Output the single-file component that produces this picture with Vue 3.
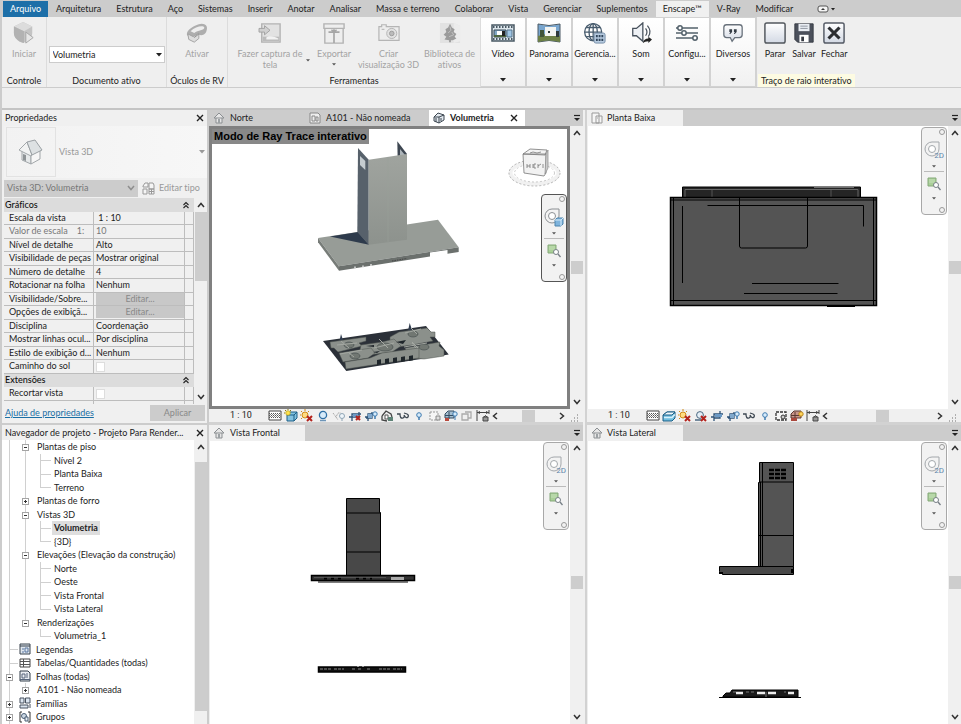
<script setup>
import { ref } from 'vue'

const ribbonTabs = ['Arquitetura', 'Estrutura', 'Aço', 'Sistemas', 'Inserir', 'Anotar', 'Analisar', 'Massa e terreno', 'Colaborar', 'Vista', 'Gerenciar', 'Suplementos', 'Enscape™', 'V-Ray', 'Modificar']
const activeRibbonTab = ref('Enscape™')

const toolButtons = [
  { lines: ['Fazer captura de', 'tela'], icon: 'capture', size: 'wide', side: true },
  { lines: ['Exportar'], icon: 'export', size: 'narrow', drop: true },
  { lines: ['Criar', 'visualização 3D'], icon: 'camera', size: 'mid' },
  { lines: ['Biblioteca de', 'ativos'], icon: 'library', size: 'mid' },
]
const dropPanels = [
  { label: 'Vídeo', icon: 'video' },
  { label: 'Panorama', icon: 'panorama' },
  { label: 'Gerencia...', icon: 'globe' },
  { label: 'Som', icon: 'sound' },
  { label: 'Configu...', icon: 'sliders' },
  { label: 'Diversos', icon: 'speech' },
]
const rayButtons = [
  { label: 'Parar', icon: 'stop' },
  { label: 'Salvar', icon: 'save' },
  { label: 'Fechar', icon: 'close' },
]

const graphics = [
  { name: 'Escala da vista', value: ' 1 : 10' },
  { name: 'Valor de escala    1:', value: '10', muted: true },
  { name: 'Nível de detalhe', value: 'Alto' },
  { name: 'Visibilidade de peças', value: 'Mostrar original' },
  { name: 'Número de detalhe', value: '4' },
  { name: 'Rotacionar na folha', value: 'Nenhum' },
  { name: 'Visibilidade/Sobre...', type: 'button' },
  { name: 'Opções de exibiçã...', type: 'button' },
  { name: 'Disciplina', value: 'Coordenação' },
  { name: 'Mostrar linhas ocul...', value: 'Por disciplina' },
  { name: 'Estilo de exibição d...', value: 'Nenhum' },
  { name: 'Caminho do sol', type: 'check' },
]
const groups = [
  { title: 'Gráficos', rows: graphics },
  { title: 'Extensões', rows: [{ name: 'Recortar vista', type: 'check' }, { name: '', value: '' }] },
]

const tree = [
  { cells: ['v', 'v minus'], text: 'Plantas de piso' },
  { cells: ['v', 'v', 't'], text: 'Nível 2' },
  { cells: ['v', 'v', 't'], text: 'Planta Baixa' },
  { cells: ['v', 'v', 'l'], text: 'Terreno' },
  { cells: ['v', 'v plus'], text: 'Plantas de forro' },
  { cells: ['v', 'v minus'], text: 'Vistas 3D' },
  { cells: ['v', 'v', 't'], text: 'Volumetria', current: true },
  { cells: ['v', 'v', 'l'], text: '{3D}' },
  { cells: ['v', 'v minus'], text: 'Elevações (Elevação da construção)' },
  { cells: ['v', 'v', 't'], text: 'Norte' },
  { cells: ['v', 'v', 't'], text: 'Oeste' },
  { cells: ['v', 'v', 't'], text: 'Vista Frontal' },
  { cells: ['v', 'v', 'l'], text: 'Vista Lateral' },
  { cells: ['v', 'half minus'], text: 'Renderizações' },
  { cells: ['v', 'none', 'l'], text: 'Volumetria_1' },
  { cells: ['t'], icon: 'legend', text: 'Legendas' },
  { cells: ['t'], icon: 'table', text: 'Tabelas/Quantidades (todas)' },
  { cells: ['v minus'], icon: 'sheets', text: 'Folhas (todas)' },
  { cells: ['v', 'half plus'], text: 'A101 - Não nomeada' },
  { cells: ['v plus'], icon: 'family', text: 'Famílias' },
  { cells: ['v plus'], icon: 'group', text: 'Grupos' },
]

const views = [
  {
    id: 'volumetria', active: true, nav: '3d', viewBox: '212 129 355 277',
    tabs: [
      { label: 'Norte', icon: 'home', size: 'plain' },
      { label: 'A101 - Não nomeada', icon: 'sheet', size: 'long' },
      { label: 'Volumetria', icon: 'box', size: 'plain', current: true },
    ],
    controls: ['grid', 'shade3d', 'sunoff', 'shadow', 'teapot', 'cropoff', 'crop', 'lockhouse', 'glasses', 'bulb', 'reveal', 'analysis', 'ghost', 'constraint'],
  },
  {
    id: 'planta', nav: '2d', viewBox: '588 126 360 283',
    tabs: [{ label: 'Planta Baixa', icon: 'plan', size: 'plain', shown: true }],
    controls: ['grid', 'shade', 'sunoff', 'shadowoff', 'cropon', 'crop', 'glasses', 'bulb', 'revealdark', 'analysissun', 'constraint'],
  },
  {
    id: 'frontal', nav: '2d', viewBox: '210 441 360 283',
    tabs: [{ label: 'Vista Frontal', icon: 'home', size: 'plain', shown: true }],
  },
  {
    id: 'lateral', nav: '2d', viewBox: '588 441 360 283',
    tabs: [{ label: 'Vista Lateral', icon: 'home', size: 'plain', shown: true }],
  },
]
</script>

<template>
  <svg class="sprite" aria-hidden="true">
    <defs>
      <linearGradient id="glass" x1="0" y1="0" x2="0" y2="1"><stop offset="0" stop-color="#fff" /><stop offset="1" stop-color="#d3d9e4" /></linearGradient>
      <linearGradient id="metal" x1="0" y1="0" x2="0" y2="1"><stop offset="0" stop-color="#a0a49f" /><stop offset="1" stop-color="#8d928d" /></linearGradient>
    </defs>
    <symbol id="i-start" viewBox="0 0 24 24">
      <path d="M1 5 11 0l10 5v7c0 5-5 9-10 11C5 21 1 17 1 12z" fill="#c4c4c4" />
      <path d="M1 5 11 0l10 5-9 5z" fill="#dcdcdc" /><path d="M12 10v13C5 21 1 17 1 12V5z" fill="#b2b2b2" />
      <path d="M14 11v12l8-6z" fill="#e6e6e6" stroke="#a3a3a3" />
    </symbol>
    <symbol id="i-vr" viewBox="0 0 24 24">
      <path d="M1 14C0 9 9 3 17 2c6 0 7 4 5 9-2 4-6 4-8 3l-5 5-5-1z" fill="#aeaeae" />
      <path d="M5 10c5-5 14-7 15-4 0 3-7 3-11 6z" fill="#eee" /><path d="m2 13 6 3 6-4v6l-5 4-6-3z" fill="#ddd" stroke="#a0a0a0" /><path d="m9 17 5-4" stroke="#888" />
    </symbol>
    <symbol id="i-capture" viewBox="0 0 24 24">
      <path d="M3 2h20v20H3z" fill="#e2e2e2" stroke="#b2b2b2" stroke-width="1.500" /><path d="M4 16h18v5H4z" fill="#bbb" />
      <path d="M8 17c3-3 10-1 13 1v1H8z" fill="#f2f2f2" /><path d="M0 7h6V4l6 5-6 5v-3H0z" fill="#d0d0d0" stroke="#a0a0a0" />
    </symbol>
    <symbol id="i-export" viewBox="0 0 24 24">
      <path d="M1 2h22v5H1zM2 7h20v16H2z" fill="#eee" stroke="#b2b2b2" stroke-width="1.500" /><path d="M12 8v15M6 11h12M9 9q3 0 3 2 0-2 3-2" fill="none" stroke="#a6a6a6" stroke-width="1.800" />
    </symbol>
    <symbol id="i-camera" viewBox="0 0 24 24">
      <path d="M1 5h3V3h5v2h14v15H1z" fill="#ededed" stroke="#b5b5b5" stroke-width="1.300" /><circle cx="15" cy="12.500" r="5.500" fill="#e2e2e2" stroke="#b0b0b0" />
      <circle cx="15" cy="12.500" r="2.500" fill="#bbb" stroke="#999" /><path d="M4 8h3" stroke="#aaa" />
    </symbol>
    <symbol id="i-library" viewBox="0 0 24 24">
      <path d="M1 1h15l7 3v19H1z" fill="#e2e2e2" /><path d="M16 1v22l7-2V4z" fill="#ececec" />
      <path d="m12 2 2 4 3 2-1 3 3 2-2 3 2 2-4 2h-2v2h-2v-2l-5-1 2-3-3-2 3-3-1-3 3-2z" fill="#9b9b9b" /><path d="m12 5 1 4-3 3m4-1 2 3-5 2" fill="none" stroke="#c4c4c4" />
    </symbol>
    <symbol id="i-video" viewBox="0 0 24 20">
      <path d="M1 2h22v16H1z" fill="#dce6ec" stroke="#4a5964" stroke-width="1.500" /><path d="M2 4h20M2 16h20" stroke="#4a5964" stroke-width="2" stroke-dasharray="1.500 1.500" />
      <path d="M3 7h12v7H3z" fill="#82a9c6" stroke="#394957" /><path d="M6 8h6v4H6z" fill="#fff" /><path d="M3 12h12v2H3z" fill="#4e6741" /><path d="M11 8h3v5h-3z" fill="#222" /><path d="M16 7h5v7h-5z" fill="#9fc6e6" stroke="#56758c" />
    </symbol>
    <symbol id="i-panorama" viewBox="0 0 24 20">
      <path d="M1 1q11 3 22 0v18q-11-3-22 0z" fill="#79a6cf" stroke="#4a5964" /><path d="M1 13q11-4 22 0v6q-11-3-22 0z" fill="#6d8045" />
      <path d="M8 4h11v9H8z" fill="#f4f5f2" /><path d="M3 7h4v7H3z" fill="#41553a" /><path d="M11 8h2v2h-2zM19 8h3v6h-3z" fill="#2f3a3a" />
    </symbol>
    <symbol id="i-globe" viewBox="0 0 24 24">
      <g fill="#fff" stroke="#465a6c" stroke-width="1.4"><circle cx="10" cy="11" r="9.300" /><ellipse cx="10" cy="11" rx="4.500" ry="9.300" fill="none" /><path d="M10 2v18M1 11h18M2.500 6h15M2.500 16h15" /></g>
      <rect x="11" y="12" width="12" height="11" rx="2" fill="#b7cbe0" stroke="#7089a3" /><path d="M13 15.500h8M13 19.500h8" stroke="#30455b" stroke-width="2.500" stroke-dasharray="2 1" />
    </symbol>
    <symbol id="i-sound" viewBox="0 0 24 24">
      <path d="M3 7h4l7-6v20l-7-6H3z" fill="#eef1f5" stroke="#47515c" stroke-width="1.400" /><path d="M17 7q3 4 0 8M19 4q5 6 1 12" fill="none" stroke="#47515c" stroke-width="1.300" />
      <path d="M14 23q1-5 6-5v-2l4 3-4 4v-2q-4 0-6 2" fill="#222" />
    </symbol>
    <symbol id="i-sliders" viewBox="0 0 24 20">
      <path d="M1 5h22M1 10h22M1 15h22" stroke="#53616b" stroke-width="1.500" /><g fill="#fff" stroke="#53616b" stroke-width="1.500"><circle cx="5" cy="5" r="2.200" /><circle cx="9" cy="10" r="2.200" /><circle cx="20" cy="15" r="2.200" /></g>
    </symbol>
    <symbol id="i-speech" viewBox="0 0 24 24">
      <path d="M5 3h14q3 0 3 3v8q0 3-3 3h-5l-3 4-2-4H5q-3 0-3-3V6q0-3 3-3z" fill="url(#glass)" stroke="#68717b" stroke-width="1.400" />
      <path d="M8 8h3v3l-2 2H8l1-2H8zM13 8h3v3l-2 2h-1l1-2h-1z" fill="#333b44" />
    </symbol>
    <symbol id="i-stop" viewBox="0 0 24 24"><rect x="1" y="1" width="22" height="22" rx="2" fill="url(#glass)" stroke="#52575d" stroke-width="1.600" /></symbol>
    <symbol id="i-save" viewBox="0 0 24 24">
      <path d="M2 2h20v20H5l-3-3z" fill="#4b505b" stroke="#363a43" /><path d="M6 2h12v8H6z" fill="#e9edf3" /><path d="M8 4.500h8M8 7h8" stroke="#8a919b" /><path d="M7 14h10v8H7z" fill="#fff" /><path d="M9 16h3v5H9z" fill="#363a43" />
    </symbol>
    <symbol id="i-close" viewBox="0 0 24 24"><rect x="1" y="1" width="22" height="22" rx="2" fill="url(#glass)" stroke="#555b66" stroke-width="1.600" /><path d="m6 6 12 12M18 6 6 18" stroke="#2b2d31" stroke-width="3.400" /></symbol>

    <symbol id="i-home" viewBox="0 0 12 12"><path d="M1 6 6 1l5 5H9v5H3V6z" fill="#e6e6e6" stroke="#8b8f92" /><path d="M3 6h6" stroke="#8b8f92" /><path d="M5 7h2v4H5z" fill="#9da2a5" /></symbol>
    <symbol id="i-sheet" viewBox="0 0 12 12"><path d="M1 1h8l2 2v8H1z" fill="#eee" stroke="#888" /><path d="M3 4h3v5H3zM7 5h2v4H7z" fill="none" stroke="#888" /></symbol>
    <symbol id="i-box" viewBox="0 0 12 12"><path d="m1 5 4-4 6 2v5l-5 3-5-2z" fill="#e4eaf0" stroke="#3d4751" /><path d="M1 5h5l5-2M6 5v6" fill="none" stroke="#3d4751" /><path d="M3 6v4M8 6v3" stroke="#3d4751" /></symbol>
    <symbol id="i-plan" viewBox="0 0 12 12"><path d="M1 1h7v10H1zM5 4h6v7H5z" fill="#f6f6f6" stroke="#999" /><path d="M6 5h2v2H6z" fill="#ccc" /></symbol>
    <symbol id="i-legend" viewBox="0 0 12 12"><path d="M1 1h10v10H1z" fill="#dfe6ee" stroke="#39424c" /><path d="M1 3h10" stroke="#39424c" /><path d="M3 6h2M3 9h2M6 5h3v4H6z" fill="none" stroke="#5877a0" /></symbol>
    <symbol id="i-table" viewBox="0 0 12 12"><path d="M1 2h10v8H1z" fill="#fff" stroke="#444" /><path d="M1 4.500h10M1 7.500h10M4.500 2v8" stroke="#555" /></symbol>
    <symbol id="i-sheets" viewBox="0 0 12 12"><path d="M1 1h8l2 2v8H1z" fill="#e9edf2" stroke="#333e4a" /><path d="M3 4h3v4H3zM8 3v5M1 9.500h10" fill="none" stroke="#56657a" /></symbol>
    <symbol id="i-family" viewBox="0 0 12 12"><path d="M1 1h4v5H1zM6.500 1H11v5H6.500zM1 8h8v3H1zM11 7v4" fill="#dce6f1" stroke="#46515e" /></symbol>
    <symbol id="i-group" viewBox="0 0 12 12"><path d="M3 1H1v10h2M9 1h2v10H9" fill="none" stroke="#333" /><circle cx="5" cy="5" r="2.500" fill="#ccd8e5" stroke="#4b5f75" /><path d="M6 6h3v4H6z" fill="#e7edf3" stroke="#4b5f75" /></symbol>

    <symbol id="i-grid" viewBox="0 0 14 14"><path d="M1 2h12v9H1z" fill="#fff" stroke="#444" /><path d="M1 4.500h12M1 6.500h12M1 8.500h12" stroke="#555" stroke-dasharray="1 1" /><path d="M1 5.500h12M1 7.500h12" stroke="#888" stroke-dasharray="1 1" stroke-dashoffset="1" /></symbol>
    <symbol id="i-shade" viewBox="0 0 14 14"><path d="m1 6 4-3h8v6l-3 3H1z" fill="#6fbdde" stroke="#1c5f86" /><path d="m1 6 4-3h8l-3 3z" fill="#f0f8fc" stroke="#1c5f86" /><path d="M2 8.500h8l3-3" fill="none" stroke="#d8f0fa" stroke-width="1.500" /></symbol>
    <symbol id="i-shade3d" viewBox="0 0 14 14"><path d="m3 6 3-3h7v6l-3 3H3z" fill="#83c2e0" stroke="#1c5f86" /><path d="M3 6h7l3-3M10 6v6" fill="none" stroke="#1c5f86" /><circle cx="4" cy="4" r="2.300" fill="#ffe34d" stroke="#b39c1c" stroke-width=".7" /><path d="M4 0v1M0 4h1M1 1l1 1M7 1 6 2" stroke="#8a7712" /></symbol>
    <symbol id="i-sunoff" viewBox="0 0 14 14"><circle cx="5" cy="6" r="3" fill="#ffdc80" stroke="#d08a18" /><path d="M5 0v2M0 6h1M1 2l1 1M9 2 8 3M1 10l1-1" stroke="#d08a18" /><path d="m7 7 5 5m0-5-5 5" stroke="#b3221c" stroke-width="2" /></symbol>
    <symbol id="i-shadow" viewBox="0 0 14 14"><circle cx="7" cy="6" r="3.600" fill="#d7ebfa" stroke="#2f6fa5" stroke-width="1.300" /><path d="M4 11.500h6" stroke="#6d95b8" stroke-width="1.500" /></symbol>
    <symbol id="i-shadowoff" viewBox="0 0 14 14"><circle cx="6" cy="6" r="3.400" fill="#e4eef6" stroke="#4b6780" /><path d="M1 11h6" stroke="#4b6780" stroke-width="1.500" /><path d="m7 7 5 5m0-5-5 5" stroke="#b3221c" stroke-width="2" /></symbol>
    <symbol id="i-teapot" viewBox="0 0 14 14"><path d="m1 4 3 4 2-4h3M4 8l2 3" fill="none" stroke="#aaa" stroke-dasharray="2 1" /><circle cx="10" cy="7" r="2.500" fill="#eef5fa" stroke="#8fa5b5" /><path d="M10 9.500V12" stroke="#8fa5b5" /></symbol>
    <symbol id="i-cropon" viewBox="0 0 14 14"><path d="M1 8h3V5h9M4 5v7M10 2v7H4" fill="none" stroke="#2d5277" stroke-width="1.300" /><path d="M5 5h7v3H5z" fill="#6c9ac6" /></symbol>
    <symbol id="i-cropoff" viewBox="0 0 14 14"><path d="M1 8h3V5h9M4 5v7M11 3v5H4" fill="none" stroke="#2d5277" stroke-width="1.300" /><path d="M5 5h5v3H5z" fill="#6c9ac6" /><path d="m8 7 4 4m0-4-4 4" stroke="#b3221c" stroke-width="2" /></symbol>
    <symbol id="i-crop" viewBox="0 0 14 14"><path d="M1 8h3V5h5M4 5v7M8 3v6H2" fill="none" stroke="#2d5277" stroke-width="1.300" /><path d="M4 5h4v4H4z" fill="#7fa8cd" /><circle cx="11" cy="5" r="2.200" fill="#d7ebfa" stroke="#3f7bb0" /><path d="M11 7v3" stroke="#3f7bb0" stroke-width="1.500" /></symbol>
    <symbol id="i-lockhouse" viewBox="0 0 14 14"><path d="M2 7 6 2l5 3 1 3M2 7v4l5 1" fill="#eee" stroke="#444" stroke-width="1.300" /><path d="M5 6h3v4H5z" fill="#fff" stroke="#555" /><rect x="8" y="8" width="5" height="4" fill="#5d8276" /></symbol>
    <symbol id="i-glasses" viewBox="0 0 14 14"><path d="M1 5h3q0 5 3 4 2-1 1-3 2 4 4 2 1-2-1-3L8 4" fill="none" stroke="#3e4852" stroke-width="1.300" /></symbol>
    <symbol id="i-bulb" viewBox="0 0 14 14"><circle cx="7" cy="6" r="2.300" fill="#d7ebfa" stroke="#3f7bb0" /><path d="M7 8v3" stroke="#3f7bb0" stroke-width="1.500" /></symbol>
    <symbol id="i-reveal" viewBox="0 0 14 14"><path d="M2 3h8v8H2z" fill="#f5f5f5" stroke="#999" stroke-dasharray="2 1" /><path d="M8 7h4v4H8z" fill="#ddd" stroke="#888" /></symbol>
    <symbol id="i-revealdark" viewBox="0 0 14 14"><path d="M2 3h10v8H2z" fill="#f5f5f5" stroke="#333" stroke-width="1.300" stroke-dasharray="3 1" /><circle cx="9" cy="8" r="2" fill="#ccc" stroke="#333" /></symbol>
    <symbol id="i-analysis" viewBox="0 0 14 14"><path d="M1 5 4 2h6v7H1zM1 6.500h9M5 3v7" fill="#a5bed0" stroke="#344d62" /><path d="M1 9h4v3H1z" fill="#b8493d" /><circle cx="11" cy="5" r="2.200" fill="#d7ebfa" stroke="#3f7bb0" /><path d="M11 7v4" stroke="#3f7bb0" /></symbol>
    <symbol id="i-analysissun" viewBox="0 0 14 14"><path d="M1 5 4 2h7v7H1zM1 6.500h9M5 3v7" fill="#c9968b" stroke="#5a3932" /><path d="M1 9h6v3H1z" fill="#a9473c" /><circle cx="11" cy="5" r="2.200" fill="#ffd45c" stroke="#b8861b" /></symbol>
    <symbol id="i-ghost" viewBox="0 0 14 14"><path d="M2 5h6v6H2zM5 3h6v6H8" fill="none" stroke="#aaa" stroke-width="1.300" /></symbol>
    <symbol id="i-constraint" viewBox="0 0 14 14"><path d="M1 1v11M13 1v4M1 3.500h12" stroke="#444" fill="none" /><path d="m1 3.500 3-1.500v3zM13 3.500 10 2v3z" fill="#444" /><path d="M7 8h5v4H7zM8 8q1.500-3 3 0" fill="#999" stroke="#444" /></symbol>

    <symbol id="i-wheel3d" viewBox="0 0 20 20"><path d="M8 1h7v7a7 7 0 1 1-7-7z" fill="#f3f3f3" stroke="#8b8f93" /><circle cx="8" cy="8" r="3.500" fill="#fff" stroke="#8b8f93" /><path d="m11 12 2-2h6v6l-2 2h-6z" fill="#7fb4dd" stroke="#4d84ad" /><path d="M11 12h6v6M17 12l2-2" fill="none" stroke="#d8ecfa" /></symbol>
    <symbol id="i-wheel2d" viewBox="0 0 20 20"><path d="M8 1h7v7a7 7 0 1 1-7-7z" fill="#f3f3f3" stroke="#a3a7ab" /><circle cx="8" cy="8" r="3.500" fill="#fff" stroke="#a3a7ab" /></symbol>
    <symbol id="i-region" viewBox="0 0 14 14"><path d="M1 1h8v8H1z" fill="#a9cf98" stroke="#84a878" /><path d="M2 3h6M2 5h6" stroke="#c6e0ba" /><circle cx="9" cy="8" r="2.500" fill="#fff" stroke="#777f86" /><path d="m11 10 2.500 3" stroke="#777f86" stroke-width="1.300" /></symbol>
    <symbol id="i-up" viewBox="0 0 8 8"><path d="M1 6 4 2.500 7 6" fill="none" stroke="#333" stroke-width="1.500" /></symbol>
    <symbol id="i-down" viewBox="0 0 8 8"><path d="M1 2 4 5.500 7 2" fill="none" stroke="#333" stroke-width="1.500" /></symbol>
    <symbol id="i-left" viewBox="0 0 8 8"><path d="M6 1 2.500 4 6 7" fill="none" stroke="#333" stroke-width="1.500" /></symbol>
    <symbol id="i-right" viewBox="0 0 8 8"><path d="M2 1 5.500 4 2 7" fill="none" stroke="#333" stroke-width="1.500" /></symbol>
    <symbol id="i-x" viewBox="0 0 8 8"><path d="m1 1 6 6M7 1 1 7" stroke="#222" stroke-width="1.400" /></symbol>
    <symbol id="i-tri" viewBox="0 0 6 4"><path d="M0 0h6L3 3.500z" fill="currentColor" /></symbol>
    <symbol id="i-menu" viewBox="0 0 8 8"><path d="M1 1.500h6" stroke="#222" stroke-width="1.200" /><path d="M1 4h6L4 7z" fill="#222" /></symbol>
    <symbol id="i-fold" viewBox="0 0 8 8"><path d="m1.500 4 2.500-2.500L6.500 4M1.500 7 4 4.500 6.500 7" fill="none" stroke="#222" stroke-width="1.100" /></symbol>
  </svg>

  <div class="app">
    <nav class="tabs">
      <button class="tab file">Arquivo</button>
      <button v-for="t in ribbonTabs" :key="t" class="tab" :class="{ current: t === activeRibbonTab }" @click="activeRibbonTab = t">{{ t }}</button>
      <button class="tab collapse" aria-label="Minimizar faixa">
        <svg width="18" height="8" viewBox="0 0 18 8"><rect x="1" y="1" width="10" height="6" rx="2" fill="#f4f4f4" stroke="#555" /><path d="m4 5 2-2 2 2z" fill="#333" /><path d="M14 3h4l-2 2.500z" fill="#222" /></svg>
      </button>
    </nav>

    <section class="ribbon">
      <div class="panel control">
        <button class="tool" disabled><svg class="ic big"><use href="#i-start" /></svg><span>Iniciar</span></button>
        <h2>Controle</h2>
      </div>
      <div class="panel document">
        <span class="select-box wide-select">
          <select aria-label="Documento ativo"><option>Volumetria</option></select>
          <svg class="tri"><use href="#i-tri" /></svg>
        </span>
        <h2>Documento ativo</h2>
      </div>
      <div class="panel goggles">
        <button class="tool" disabled><svg class="ic big"><use href="#i-vr" /></svg><span>Ativar</span></button>
        <h2>Óculos de RV</h2>
      </div>
      <div class="panel tools">
        <div class="tool-row">
          <button v-for="b in toolButtons" :key="b.icon" class="tool" :class="b.size" disabled>
            <svg class="ic big"><use :href="'#i-' + b.icon" /></svg>
            <span v-for="l in b.lines" :key="l">{{ l }}</span>
            <svg v-if="b.drop" class="tri small"><use href="#i-tri" /></svg>
            <svg v-if="b.side" class="tri small side"><use href="#i-tri" /></svg>
          </button>
        </div>
        <h2>Ferramentas</h2>
      </div>
      <button v-for="p in dropPanels" :key="p.label" class="drop-panel">
        <svg class="ic big"><use :href="'#i-' + p.icon" /></svg><span>{{ p.label }}</span>
        <svg class="tri"><use href="#i-tri" /></svg>
      </button>
      <div class="panel ray">
        <div class="ray-row">
          <button v-for="b in rayButtons" :key="b.label" class="tool"><svg class="ic big"><use :href="'#i-' + b.icon" /></svg><span>{{ b.label }}</span></button>
        </div>
        <h2>Traço de raio interativo</h2>
      </div>
    </section>
    <div class="options"></div>

    <main class="workspace">
      <aside class="dock properties">
        <header class="dock-title"><h3>Propriedades</h3><button aria-label="Fechar propriedades"><svg class="g8"><use href="#i-x" /></svg></button></header>
        <div class="type">
          <div class="thumb">
            <svg width="26" height="26" viewBox="0 0 26 26"><path d="m4 10 9 4v11l-9-4z" fill="#e6e9ea" stroke="#a2a7aa" /><path d="m13 15 9-5v10l-9 5z" fill="#f6f6f6" stroke="#a2a7aa" /><path d="m1 11 8-8 5 13-1 1z" fill="#f2f3f3" stroke="#a2a7aa" /><path d="m9 3 8-2 7 10-10 5z" fill="#dde1e3" stroke="#9aa0a4" /><path d="m5 15 3 1v6l-3-1z" fill="#8f9497" /></svg>
          </div>
          <span class="type-name">Vista 3D</span>
          <svg class="tri"><use href="#i-tri" /></svg>
        </div>
        <div class="instance">
          <span class="select-box grey-select">
            <select aria-label="Vista" disabled><option>Vista 3D: Volumetria</option></select>
            <svg class="g8 faint"><use href="#i-down" /></svg>
          </span>
          <button class="edit-type" disabled>
            <svg width="13" height="13" viewBox="0 0 13 13"><path d="M1 4 3 1h3v4H1zM7 1h4l1 2v4H7zM1 7h4v5H1zM7 7h5v5H7zM7 9.500h5M9.500 7v5" fill="#f5f5f5" stroke="#999" /></svg>
            Editar tipo
          </button>
        </div>
        <div class="list">
          <table class="props">
            <tbody v-for="g in groups" :key="g.title">
              <tr class="group"><th colspan="3" scope="rowgroup">{{ g.title }}<svg class="g8"><use href="#i-fold" /></svg></th></tr>
              <tr v-for="(r, i) in g.rows" :key="i" :class="{ muted: r.muted }">
                <th scope="row">{{ r.name }}</th>
                <td>
                  <button v-if="r.type === 'button'" class="cell-button" disabled>Editar...</button>
                  <input v-else-if="r.type === 'check'" type="checkbox" :aria-label="r.name" />
                  <template v-else>{{ r.value }}</template>
                </td>
                <td></td>
              </tr>
            </tbody>
          </table>
          <div class="vbar"><svg class="g8"><use href="#i-up" /></svg><div class="track top"><i class="knob props-knob"></i></div><svg class="g8"><use href="#i-down" /></svg></div>
        </div>
        <footer class="foot"><a href="#">Ajuda de propriedades</a><button disabled>Aplicar</button></footer>
      </aside>

      <article v-for="v in views" :key="v.id" class="view" :class="v.id">
        <div class="strip">
          <div v-for="t in v.tabs" :key="t.label" class="vtab" :class="[t.size, { current: t.current, shown: t.shown }]">
            <button class="vtab-name"><svg class="g12"><use :href="'#i-' + t.icon" /></svg>{{ t.label }}</button>
            <button v-if="t.current" aria-label="Fechar vista"><svg class="g8"><use href="#i-x" /></svg></button>
          </div>
          <button class="strip-menu" aria-label="Lista de vistas"><svg class="g8"><use href="#i-menu" /></svg></button>
        </div>
        <div class="stage">
          <div class="canvas" :class="{ active: v.active }">
            <svg class="drawing" :viewBox="v.viewBox">
              <g v-if="v.id === 'volumetria'">
                <path d="m397.300 141.300 9.700 12.700v30l-9-10z" fill="#3d4651" />
                <path d="m400 149 5 6v8l-5-6z" fill="#aeb6bb" />
                <path d="m318 238 120-18.300 20.700 27.600-119.700 19z" fill="#979c97" />
                <path d="m318 238 21 28.300v4.400l-21-28.400z" fill="#777c78" /><path d="m339 266.300 119.700-19v4.700L339 270.700z" fill="#6b706d" />
                <path d="m330 236.500 28-4.500 11 12.700z" fill="#2e3b4c" />
                <path d="m358 148 10.700 11.700v85L357.300 232z" fill="#57616b" /><path d="m360 156 5.300 5v9l-5.300-5z" fill="#c5ccd0" />
                <path d="m368.700 159.700 38.300-5.700v85.700l-38.300 5z" fill="url(#metal)" /><path d="M388 157v85" stroke="#9ba09b" stroke-width=".5" />
                <path d="m430 252.500 17.500-2.500v4.500l-17.500 2.700z" fill="#fff" /><path d="M355 266.500v2M363 265.500v2M371 264v2" stroke="#ddd" stroke-width="1.500" /><path d="m392 261 15-2.500" stroke="#444" stroke-dasharray="1.500 1" />
                <path d="m323 341 103-15 22.700 28.500L346.300 371z" fill="#2b3038" />
                <path d="m341 334-2 9h5zM409.700 323l-2 9h5z" fill="#303c4e" />
                <g fill="#8b908b" stroke="#4c524e" stroke-width=".5">
                  <path d="m330 342 36-5v4l-7 2 3 3-24 6-4-4h-3z" /><path d="m390 337 9-5 28-4 4 4h4v5h-5l3 4-21 4-22 3z" />
                  <path d="m361 345 21-3 12-3 7 7-9 6-24 3-8-5z" /><path d="m339 353 32-5 4 5-7 5-25 4z" /><path d="m405 348 35-6-1 4 5 4v6l-20 3-15-1z" />
                  <path d="m345 362 25-4 12-5 37-5v10l-73 11z" />
                </g>
                <g fill="#717772" stroke="#42494a" stroke-width=".6"><ellipse cx="349" cy="345" rx="5" ry="3" /><ellipse cx="413" cy="334" rx="5" ry="3" /><ellipse cx="385" cy="347" rx="8" ry="4" /><ellipse cx="355" cy="356" rx="5" ry="3" /><ellipse cx="424" cy="347" rx="5" ry="3" /></g>
                <path d="m337 345 20-2m-16-2 8 7m25 0 20-5m-15-4 9 9m17-15 16-4m-10-1 6 6m-77 20 22-4m42-3 23-4m-15-1 6 6m-69 5 5 4m58-14 4 5" stroke="#a4a8a2" />
                <g fill="#1f262b"><path d="m377 360 4-.7v5l-4 .7zM385 359l4-.7v5l-4 .7zM393 358l4-.7v5l-4 .7zM401 357l4-.7v5l-4 .7zM409 356l4-.7v5l-4 .7z" /><path d="m366 346 8-1v2zm30-4 10-2-3 4zM373 352l7-1-3 2z" /></g>
                <ellipse cx="534.500" cy="173" rx="24" ry="11" fill="none" stroke="#d6d6d6" stroke-width="4" opacity=".35" /><ellipse cx="534.500" cy="173" rx="25.500" ry="13" fill="none" stroke="#999" stroke-width=".7" stroke-dasharray="2 2" /><ellipse cx="534.500" cy="173" rx="20" ry="9" fill="none" stroke="#b5b5b5" stroke-width=".7" stroke-dasharray="2 2" />
                <path d="m523 154 7-5 17 1-2 5zM523 154h23v19l-2 3-20-3z" fill="#f2f2f2" stroke="#777" stroke-width=".8" /><path d="m546 154 2-4v18l-3 6z" fill="#ccc" stroke="#888" stroke-width=".7" />
                <path d="M527 164v4m0-2h3m0-2v4m3-4v4m3 0h-2v-4h2m2 0v4m0-2 3-2m2 0v4M530 153l3-1 4 1 4-1" stroke="#777" stroke-width=".8" fill="none" />
              </g>
              <g v-else-if="v.id === 'planta'" fill="none" stroke="#000" stroke-width="1">
                <path d="M682.500 198v-11h178v11z" fill="#252525" /><path d="M685 197v-7.500h173v7.500" stroke="#666" /><path d="M712 190v8m119-8v8" stroke="#555" /><path d="M814 187.500h40" stroke="#ccc" stroke-width=".5" />
                <path d="M670.500 197.500h206v108h-206z" fill="#545454" stroke-width="1.500" /><path d="M673.500 198v107m200-107v107M671 300.500h205M671 200h205" />
                <path d="M739.500 198v48q0 2 2 2h64q2 0 2-2v-48M707.500 205.500h156v21M682.500 206v77M752 283.500h86.500M744 293.500h93.500M827 306.500h28" />
              </g>
              <g v-else-if="v.id === 'frontal'" stroke="#000">
                <path d="M346.500 498.500h33v14h1v63h-34z" fill="#484848" /><path d="M346 513h34M346 552h35" />
                <path d="M311.500 575.500h103v5h-103z" fill="#333" stroke-width="1.500" /><path d="M318 582h90" /><path d="M324 578.500h20M356 578.500h16" stroke="#000" stroke-width="2" stroke-dasharray="3 4" /><path d="M314 577.500h72" stroke="#777" stroke-width=".5" /><path d="M391 577h13v3h-13z" fill="#aaa" stroke="none" />
                <path d="M318.500 667h87v5h-87z" fill="#111" stroke-width="1.500" /><path d="M320 669h11m3 0h10m8 0h3m3 0h4m5 0h4m8 0h12m2 0h9" stroke="#888" stroke-width="1" stroke-dasharray="3 1" /><path d="M357 666h10" stroke="#fff" stroke-dasharray="2 3" />
              </g>
              <g v-else stroke="#000">
                <path d="M759.500 462.500h34v104h-35v-84h1z" fill="#545454" /><path d="M762.500 462v104M759 482h35M759 535.500h35M760.500 482v84" fill="none" />
                <path d="M769 470h17M769 474h17M769 478h17" stroke-width="2.500" stroke-dasharray="5 1" />
                <path d="M719.500 566.500h74v8h-71l-3-3z" fill="#484848" /><path d="M719 573h4M792 569v4" stroke-width="2" />
                <path d="M719 697.500h82" /><path d="m723 696 3-3h4l2-3h66v7h-75z" fill="#1c1c1c" /><path d="M736 693h7m14 0h8m3 0h8m12 0h6" stroke="#eee" stroke-width="2.500" /><path d="M733 692h3m10 0h3m2 0h3m12 0v5m18-5h2" stroke="#777" />
              </g>
            </svg>
            <strong v-if="v.active" class="mode">Modo de Ray Trace interativo</strong>
            <div class="navtool" :class="{ low: v.active }">
              <i class="dot"></i>
              <button aria-label="Roda de navegação" class="wheel"><svg width="20" height="20"><use :href="'#i-wheel' + v.nav" /></svg><b v-if="v.nav === '2d'">2D</b></button>
              <svg class="tri small"><use href="#i-tri" /></svg>
              <hr />
              <button aria-label="Zoom na região"><svg width="14" height="14"><use href="#i-region" /></svg></button>
              <svg class="tri small"><use href="#i-tri" /></svg>
              <i class="dot last"></i>
            </div>
          </div>
          <div class="vbar"><svg class="g8"><use href="#i-up" /></svg><div class="track"><i class="knob"></i></div><svg class="g8"><use href="#i-down" /></svg></div>
        </div>
        <div v-if="v.controls" class="controls">
          <button class="scale">1 : 10</button>
          <button v-for="c in v.controls" :key="c" class="ctl" :aria-label="c"><svg width="14" height="14"><use :href="'#i-' + c" /></svg></button>
          <div class="hbar"><svg class="g8"><use href="#i-left" /></svg><div class="track"><i class="knob"></i></div><svg class="g8"><use href="#i-right" /></svg></div>
          <svg class="grip" width="8" height="8" viewBox="0 0 8 8"><path d="M6 1h1M3 4h1M6 4h1M0 7h1M3 7h1M6 7h1" stroke="#999" stroke-width="1.500" /></svg>
        </div>
      </article>

      <aside class="dock browser">
        <header class="dock-title"><h3>Navegador de projeto - Projeto Para Render...</h3><button aria-label="Fechar navegador"><svg class="g8"><use href="#i-x" /></svg></button></header>
        <div class="list">
          <ul class="tree">
            <li v-for="n in tree" :key="n.text" :class="{ current: n.current }">
              <i v-for="(c, i) in n.cells" :key="i" class="cell" :class="c"></i>
              <svg v-if="n.icon" class="g12"><use :href="'#i-' + n.icon" /></svg>
              <span>{{ n.text }}</span>
            </li>
          </ul>
          <div class="vbar"><svg class="g8"><use href="#i-up" /></svg><div class="track top"><i class="knob tree-knob"></i></div></div>
        </div>
      </aside>
    </main>
  </div>
</template>

<style>
body { background: #ccc; }
</style>

<style scoped>
*, *::before, *::after { box-sizing: border-box; }
.sprite { position: absolute; width: 0; height: 0; }
.app {
  display: flex; flex-direction: column; height: 100vh; overflow: hidden;
  padding-left: 2px; background: #ccc; color: #222;
  font: 9px/1.5 Lato, "Liberation Sans", sans-serif;
  font-variant-ligatures: none;
}
button, select, input { margin: 0; padding: 0; border: 0; background: none; color: inherit; font: inherit; font-variant-ligatures: none; }
button { white-space: nowrap; }
h2, h3, ul { margin: 0; padding: 0; font-size: 9px; font-weight: 400; }
svg { display: block; flex: none; }
.g8 { width: 8px; height: 8px; }
.g12 { width: 12px; height: 12px; }
.tri { width: 6px; height: 4px; }
.tri.small { width: 4px; height: 3px; }

.tabs { display: flex; gap: 1px; height: 17px; padding-top: 1px; padding-left: 1px; }
.tab { height: 16px; padding: 0 7px; line-height: 16px; }
.tab.file { width: 45px; background: #1d6fa8; color: #fff; }
.tab.current { background: #f0f0f0; }
.tab.collapse { padding-left: 16px; }

.ribbon { display: flex; height: 71px; background: #efefef; border-bottom: 1px solid #ccc; }
.panel { display: flex; flex-direction: column; align-items: center; justify-content: space-between; padding: 5px 0 0; border-right: 1px solid #dcdcdc; }
.panel h2 { white-space: nowrap; }
.control { width: 45px; }
.document { width: 120px; padding-top: 29px; }
.goggles { width: 61px; }
.tools { width: 253px; }
.ic.big { width: 24px; height: 22px; margin-bottom: 4px; }
.tool { position: relative; display: flex; flex-direction: column; align-items: center; line-height: 11px; }
.tool:disabled { color: #a3a3a3; }
.tool-row { display: flex; width: 100%; padding-left: 2px; }
.tool.wide { width: 80px; }
.tool.narrow { width: 48px; }
.tool.mid { width: 61px; }
.tool .tri { margin-top: 4px; color: #555; }
.tool .tri.side { position: absolute; right: 0; bottom: 8px; }
.drop-panel { display: flex; flex-direction: column; align-items: center; width: 46px; padding: 4px 0; line-height: 11px; background: linear-gradient(#fff, #f1f1f1); border: 1px solid #d2d2d2; border-width: 1px 2px 1px 0; }
.drop-panel .tri { margin-top: auto; }
.ray { flex: 1; align-items: flex-start; border: 0; padding-left: 1px; }
.ray-row { display: flex; gap: 5px; padding-left: 5px; }
.ray h2 { background: #fdfbe2; padding: 0 3px; }
.options { height: 22px; background: #efefef; border-bottom: 2px solid #c4c4c4; }

.select-box { position: relative; display: flex; align-items: center; }
.select-box select { appearance: none; width: 100%; height: 17px; padding: 0 3px; border-radius: 0; opacity: 1; }
.select-box svg { position: absolute; right: 3px; }
.wide-select { width: 116px; }
.wide-select select { background: #fff; border: 1px solid #ccc; }
.grey-select { width: 134px; }
.grey-select select { background: #ccc; color: #777; }
.faint { opacity: .4; }

.workspace { flex: 1; min-height: 0; display: grid; grid-template-columns: 207px minmax(0, 1fr) minmax(0, 1fr); grid-template-rows: auto minmax(0, 1fr); }
.dock { display: flex; flex-direction: column; min-height: 0; background: #f0f0f0; margin-right: 2px; overflow: hidden; }
.properties { grid-area: 1 / 1; border-bottom: 2px solid #ccc; }
.browser { grid-area: 2 / 1; }
.volumetria { grid-area: 1 / 2; }
.planta { grid-area: 1 / 3; }
.frontal { grid-area: 2 / 2; }
.lateral { grid-area: 2 / 3; }
.dock-title { display: flex; justify-content: space-between; align-items: center; height: 16px; padding: 0 3px; flex: none; white-space: nowrap; }
.browser .dock-title { height: 15px; }
.type { display: flex; align-items: center; height: 52px; padding: 1px 2px; margin-left: 2px; gap: 3px; color: #999; background: linear-gradient(90deg, #f2f2f2, #f7f7f7); }
.thumb { display: grid; place-items: center; width: 50px; height: 50px; border: 1px solid #e2e2e2; }
.type .tri { margin-left: auto; }
.instance { display: flex; align-items: center; gap: 4px; height: 20px; padding-left: 2px; }
.edit-type { display: flex; align-items: center; gap: 4px; color: #999; }
.list { flex: 1; min-height: 0; display: flex; }
.properties .list { flex: none; height: 206px; overflow: hidden; }
.props { flex: 1; display: block; min-width: 0; overflow: hidden; margin-left: 2px; }
.props tbody { display: block; }
.props tr { display: grid; grid-template-columns: 90px minmax(0, 1fr) 9px; height: 1.5em; }
.props th, .props td { padding: 0 0 0 2px; font-weight: 400; text-align: left; white-space: pre; overflow: hidden; border: solid #bdbdbd; border-width: 0 1px 1px 0; line-height: 12px; }
.props th { padding-left: 5px; }
.props .muted { color: #777; }
.props .group { display: block; }
.props .group th { display: flex; justify-content: space-between; align-items: center; height: 100%; padding: 0 4px 0 1px; background: #dcdcdc; border: 0; font-weight: 500; color: #111; }
.cell-button { display: block; width: 100%; height: 12px; line-height: 12px; background: #c8c8c8; color: #888; }
.props input { display: block; appearance: none; width: 9px; height: 10px; margin-top: 2px; background: #fff; border: 1px solid #ddd; }
.foot { display: flex; justify-content: space-between; align-items: center; height: 19px; padding: 0 2px 2px 3px; }
.foot a { color: #1a6fa5; }
.foot button { width: 55px; height: 16px; background: #ccc; color: #888; }

.vbar { display: flex; flex-direction: column; align-items: center; width: 13px; flex: none; background: #f0f0f0; padding: 3px 0; }
.track { flex: 1; display: flex; align-items: center; justify-content: center; }
.track.top { align-items: flex-start; padding-top: 3px; }
.knob { width: 12px; height: 13px; background: #cdcdcd; }
.props-knob { height: 69px; }
.tree-knob { height: 249px; margin-top: 8px; }

.view { display: flex; flex-direction: column; min-width: 0; min-height: 0; background: #f0f0f0; }
.volumetria, .frontal { padding-right: 2px; }
.planta, .lateral { border-left: 2px solid #d2d2d2; }
.strip { display: flex; height: 16px; background: #ccc; flex: none; }
.vtab { display: flex; align-items: center; justify-content: space-between; padding: 0 7px 0 4px; }
.vtab.plain { width: 96px; }
.vtab.long { width: 124px; }
.vtab.shown { background: #f0f0f0; }
.vtab.current { background: #fff; font-weight: 700; }
.vtab-name { display: flex; align-items: center; gap: 5px; }
.planta .vtab-name, .lateral .vtab-name { gap: 4px; }
.strip-menu { margin-left: auto; padding: 0 2px; }
.stage { flex: 1; min-height: 0; display: flex; }
.canvas { position: relative; flex: 1; min-width: 0; background: #fff; border-left: 1px solid #eee; overflow: hidden; }
.canvas.active { border: 3px solid #808080; }
.drawing { position: absolute; inset: 0; width: 100%; height: 100%; }
.mode { position: absolute; top: 0; left: 0; padding: 0 2px; background: #888; color: #000; font: 700 11px/15px "Liberation Sans", Arial, sans-serif; white-space: nowrap; }
.navtool { position: absolute; top: 1px; right: 1px; width: 26px; height: 88px; display: flex; flex-direction: column; align-items: center; background: #f2f2f2; border: 1px solid #a8a8a8; border-radius: 4px; color: #555; }
.navtool.low { top: 65px; right: 0; border-color: #555; }
.dot { width: 6px; height: 6px; margin: 1px 1px 6px; align-self: flex-end; flex: none; border: 1px solid #999; border-radius: 50%; }
.dot.last { margin: auto 1px 1px; }
.wheel { position: relative; margin-bottom: 3px; }
.wheel b { position: absolute; right: 0; bottom: 1px; color: #5f86ab; font: 400 8px/8px Roboto, sans-serif; }
.navtool hr { width: 20px; margin: 3px 0 5px; border: 0; border-top: 1px solid #bbb; }
.navtool button + .tri { margin-top: 1px; }
.navtool hr + button + .tri { margin-top: 6px; }
.controls { display: flex; align-items: center; height: 16px; border-bottom: 3px solid #d2d2d2; flex: none; }
.scale { width: 58px; padding-left: 6px; font-family: Roboto, sans-serif; }
.ctl { width: 16px; display: grid; place-items: center; }
.hbar { flex: 1; display: flex; align-items: center; }
.hbar .knob { height: 12px; width: 13px; }
.grip { margin: 4px 4px 0 5px; }

.tree { flex: 1; min-width: 0; overflow: hidden; background: #fff; list-style: none; white-space: nowrap; }
.tree li { display: flex; align-items: center; height: 1.5em; }
.tree .cell { position: relative; flex: none; width: 15px; height: 100%; }
.tree .cell:first-child { width: 16px; }
.tree .cell + .cell + .cell { width: 18px; margin-right: 1px; }
.tree .cell::before { content: ""; position: absolute; left: 7px; top: 0; bottom: 0; border-left: 1px solid #d0d0d0; }
.tree .none::before { display: none; }
.tree .l::before, .tree .half::before { bottom: 50%; }
.tree .t::after, .tree .l::after { content: ""; position: absolute; left: 7px; right: 0; top: 50%; border-top: 1px solid #d0d0d0; }
.tree .plus::after, .tree .minus::after {
  content: ""; position: absolute; left: 4px; top: 4px; width: 7px; height: 7px; border: 1px solid #a4a4a4;
  background: linear-gradient(#333, #333) center / 3px 1px no-repeat, #fff;
}
.tree .plus::after { background: linear-gradient(#333, #333) center / 3px 1px no-repeat, linear-gradient(#333, #333) center / 1px 3px no-repeat, #fff; }
.tree li span { padding: 0 2px; }
.tree .cell + span { margin-left: 2px; }
.tree .cell + .cell + .cell + span { margin-left: 0; }
.tree .current span { background: #dedede; font-weight: 700; }
.tree svg { margin: 0 3px 0 1px; }
</style>
